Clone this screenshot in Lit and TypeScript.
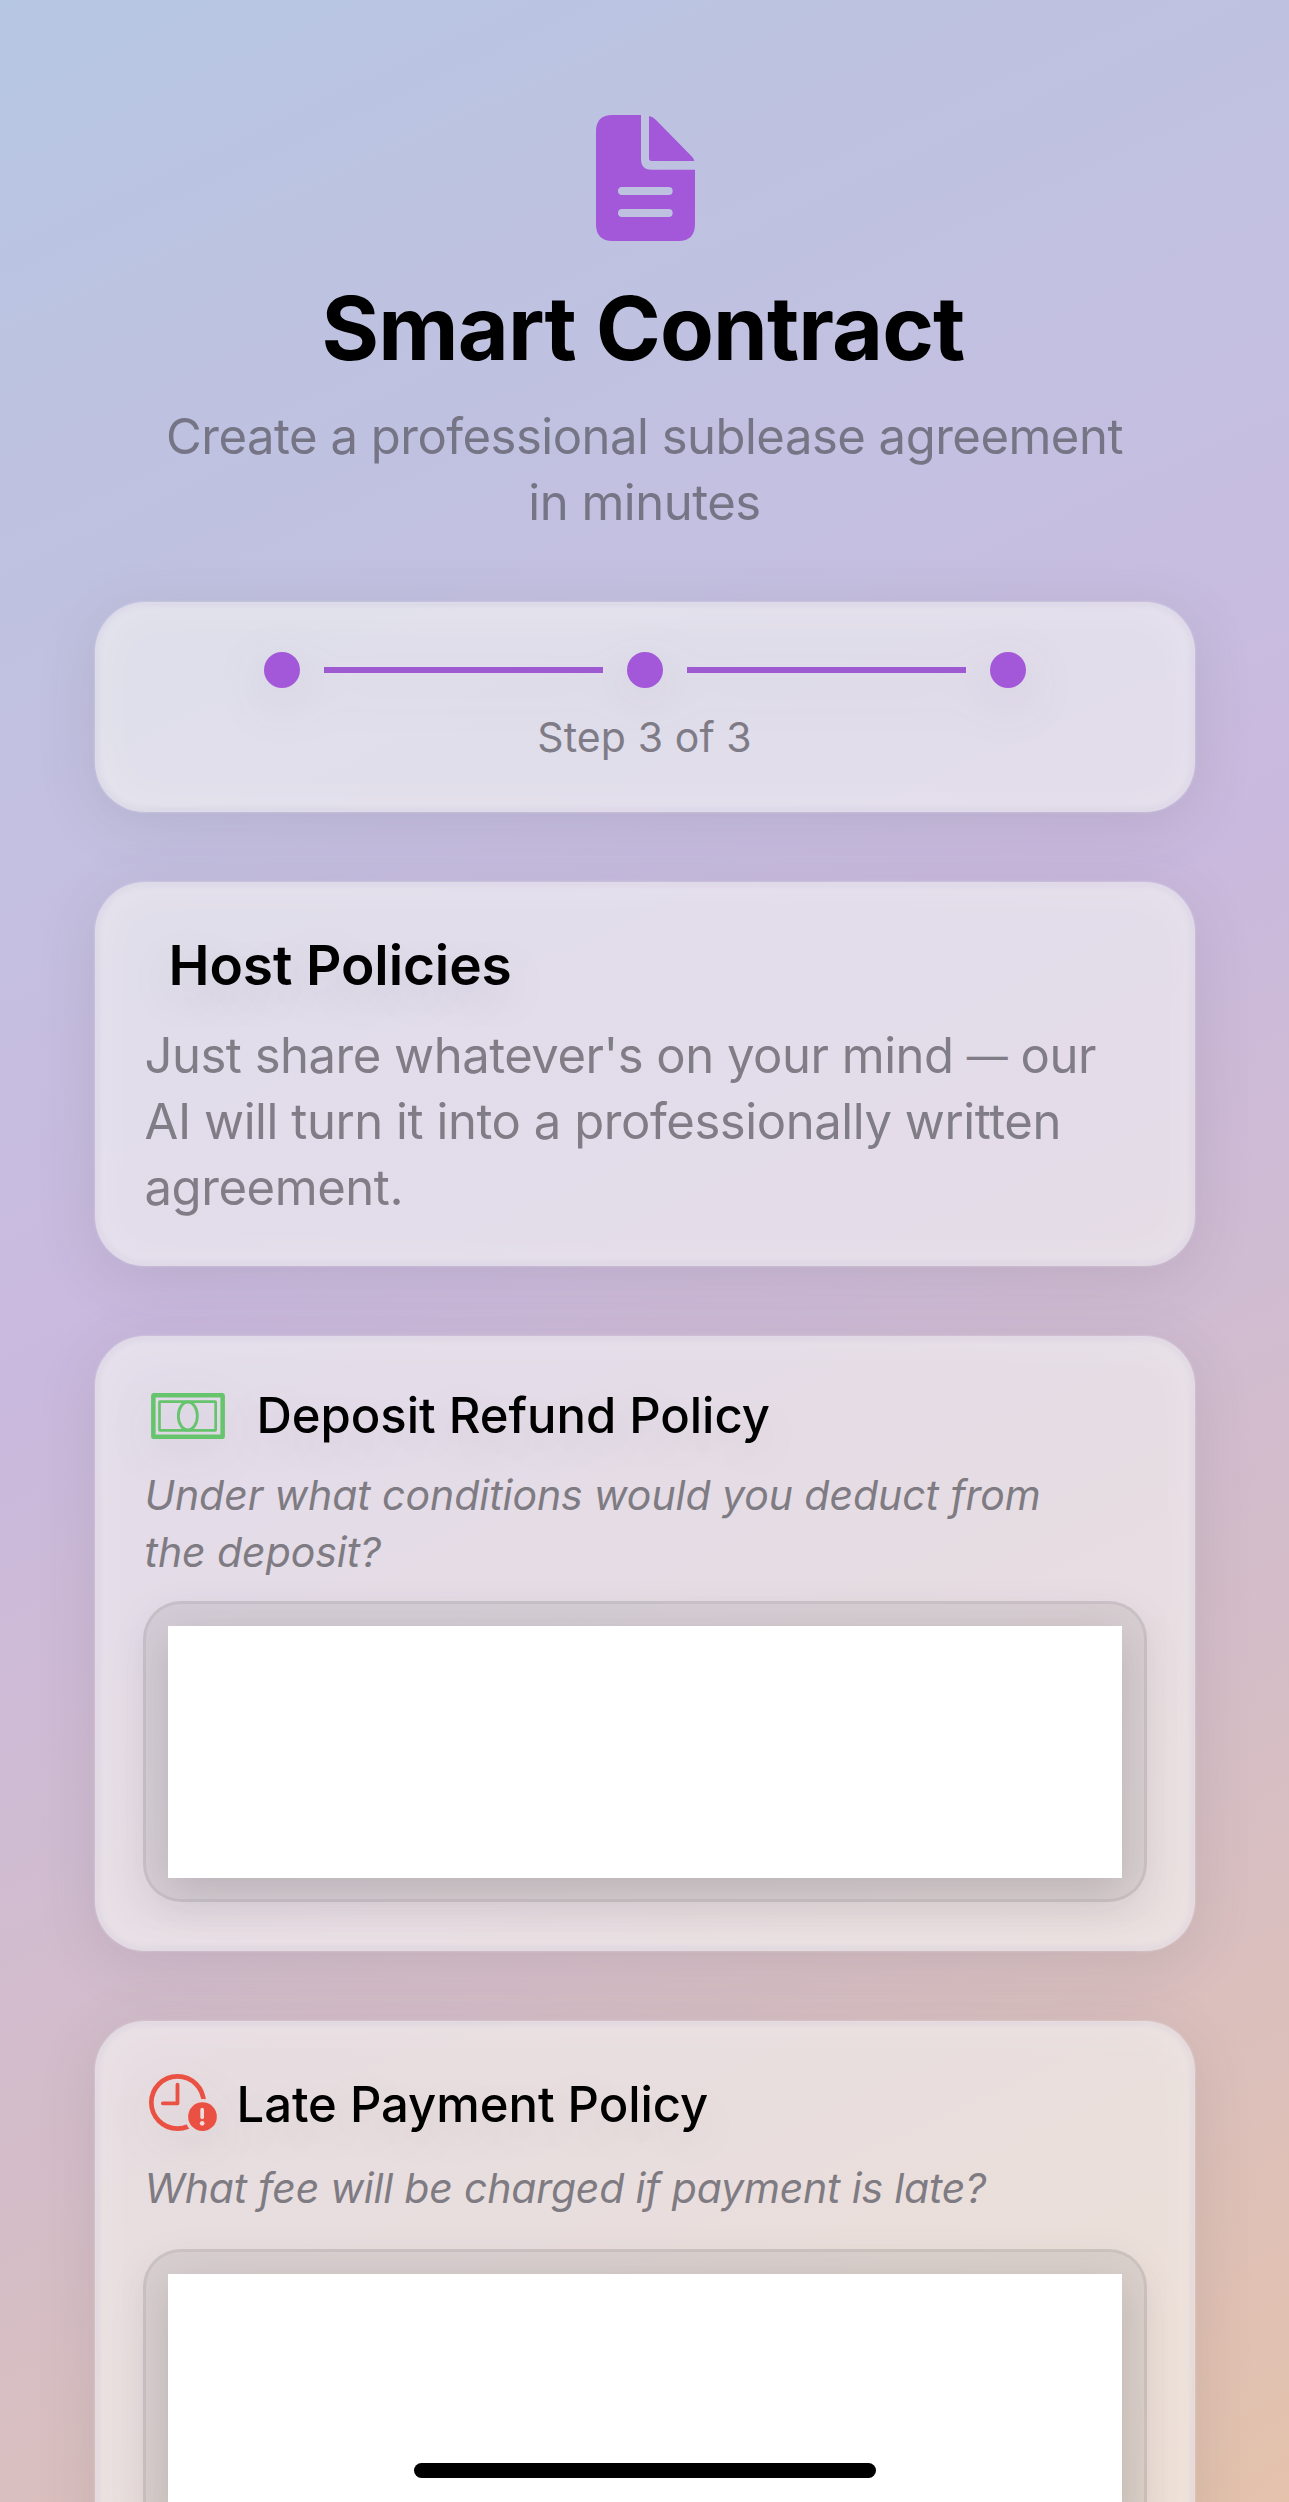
import { LitElement, html, css, svg, nothing } from "lit";
import { customElement, property } from "lit/decorators.js";

const documentIcon = html`
  <svg class="doc" viewBox="108 75 297 378" width="99" height="126" fill="currentColor">
    <path
      fill-rule="evenodd"
      d="M158 75H243V207Q243 239 274 239H405V402Q405 453 355 453H158Q108 453 108 403V124Q108 75 158 75Z
         M186 291a12 12 0 0 0 0 24H326a12 12 0 0 0 0-24Z
         M186 357a12 12 0 0 0 0 24H326a12 12 0 0 0 0-24Z"
    />
    <path d="M267 78Q278 80 288 90L391 195Q402 206 403 213H275Q267 213 267 205Z" />
  </svg>
`;

const banknoteIcon = html`
  <svg viewBox="63 69 222 138" width="74" height="46" fill="none" stroke="#66c46c">
    <rect x="70" y="75.500" width="208" height="125" rx="2" stroke-width="13.500" />
    <rect x="88.500" y="95" width="168.500" height="86" rx="1" stroke-width="8" />
    <ellipse cx="173.500" cy="138" rx="28.500" ry="42" stroke-width="8.500" />
  </svg>
`;

const clockAlertIcon = html`
  <svg viewBox="57 72 203 171" width="68" height="57" fill="none" stroke="#ea5142">
    ${svg`
      <defs>
        <mask id="badge-gap" maskUnits="userSpaceOnUse" x="50" y="60" width="220" height="190">
          <rect x="50" y="60" width="220" height="190" fill="#fff" stroke="none" />
          <circle cx="217" cy="200" r="53" fill="#000" stroke="none" />
        </mask>
      </defs>
      <circle cx="142" cy="157.500" r="78.500" stroke-width="14" mask="url(#badge-gap)" />
      <path d="M142 104V160H98" stroke-width="11.500" stroke-linecap="round" stroke-linejoin="round" />
      <circle cx="217" cy="200" r="43" fill="#ea5142" stroke="none" />
      <path d="M216 179V202" stroke="#efdcdd" stroke-width="11" stroke-linecap="round" />
      <circle cx="216" cy="220" r="7" fill="#efdcdd" stroke="none" />
    `}
  </svg>
`;

@customElement("glass-card")
class GlassCard extends LitElement {
  static styles = css`
    :host {
      display: block;
      box-sizing: border-box;
      width: 1100px;
      padding: 47px 49px;
      border-radius: 50px;
      background: rgba(244, 244, 243, 0.58);
      box-shadow:
        inset 0 0 4px 5px rgba(196, 184, 210, 0.18),
        inset 0 0 50px rgba(255, 255, 255, 0.26),
        0 0 3px rgba(255, 255, 255, 0.35),
        0 12px 60px rgba(75, 75, 85, 0.14);
    }
  `;
  render() {
    return html`<slot></slot>`;
  }
}

@customElement("step-progress")
class StepProgress extends LitElement {
  @property({ type: Number }) current = 1;
  @property({ type: Number }) total = 1;

  static styles = css`
    :host {
      display: block;
    }
    .track {
      display: flex;
      align-items: center;
      justify-content: center;
      gap: 24px;
      height: 36px;
      margin-top: 3px;
      filter: drop-shadow(0 14px 26px rgba(70, 65, 75, 0.12));
    }
    .dot {
      width: 36px;
      height: 36px;
      border-radius: 50%;
      background: #a258d8;
    }
    .line {
      width: 279px;
      height: 6px;
      background: #9e5ad0;
    }
    .label {
      margin-top: 22px;
      font-size: 41px;
      line-height: 54px;
      letter-spacing: 0.1px;
      text-align: center;
      color: #7f7c87;
    }
  `;
  render() {
    return html`
      <div class="track">
        ${Array.from(
          { length: this.total },
          (_, i) => html`${i ? html`<div class="line"></div>` : nothing}<div class="dot"></div>`,
        )}
      </div>
      <div class="label">Step ${this.current} of ${this.total}</div>
    `;
  }
}

@customElement("policy-field")
class PolicyField extends LitElement {
  static styles = css`
    :host {
      display: block;
      box-sizing: border-box;
      width: 1004px;
      height: 301px;
      margin-left: -1px;
      padding: 22px;
      border: 3px solid rgba(80, 75, 80, 0.1);
      border-radius: 38px;
      background: rgba(110, 110, 110, 0.13);
      box-shadow: 0 8px 40px rgba(75, 75, 80, 0.06);
    }
    .editor {
      height: 252px;
      background: #fff;
      box-shadow: 0 12px 40px rgba(70, 66, 68, 0.2);
    }
  `;
  render() {
    return html`<div class="editor"></div>`;
  }
}

@customElement("app-root")
class AppRoot extends LitElement {
  static styles = css`
    :host {
      display: block;
      font-family: Inter, "Liberation Sans", sans-serif;
    }
    .screen {
      position: relative;
      box-sizing: border-box;
      width: 1289px;
      height: 2502px;
      overflow: hidden;
      background: linear-gradient(
          155.250deg,
          #b2cbe6 0%,
          #bdc2e0 22%,
          #c4c0e1 35%,
          #cab9de 50%,
          #d6bec5 77%,
          #e4c2ac 100%
        )
        left bottom / 100% 2796px no-repeat;
    }
    .content {
      display: flex;
      flex-direction: column;
      align-items: center;
      padding-top: 115px;
    }
    svg {
      display: block;
      flex: none;
    }
    .doc {
      color: #a258d8;
      margin-left: 1px;
    }
    h1,
    h2,
    h3,
    p {
      margin: 0;
      white-space: nowrap;
    }
    h1 {
      margin: 33px 3px 0 0;
      font-size: 88px;
      font-weight: 700;
      line-height: 108px;
      letter-spacing: -0.9px;
      color: #000;
    }
    .subtitle {
      margin: 22px 0 66px;
      font-size: 49px;
      line-height: 66px;
      letter-spacing: -0.5px;
      text-align: center;
      color: #757586;
    }
    .cards {
      display: flex;
      flex-direction: column;
      gap: 70px;
    }
    .steps {
      height: 210px;
    }
    .intro {
      height: 384px;
    }
    .deposit {
      height: 615px;
    }
    .late {
      height: 640px;
    }
    h2 {
      padding-left: 25px;
      font-size: 55px;
      font-weight: 600;
      line-height: 72px;
      letter-spacing: -0.1px;
      color: #000;
      text-shadow: 0 14px 50px rgba(60, 55, 65, 0.14);
    }
    .body {
      margin: 22px 0 0 1px;
      font-size: 49px;
      line-height: 66px;
      letter-spacing: -0.43px;
      color: #807d86;
    }
    .lead {
      letter-spacing: -0.49px;
    }
    .dash {
      font-size: 41px;
      vertical-align: 2px;
      line-height: 1;
    }
    .heading {
      display: flex;
      align-items: center;
    }
    .heading svg {
      filter: drop-shadow(0 14px 22px rgba(60, 55, 65, 0.1));
    }
    .deposit .heading {
      height: 66px;
      padding-left: 7px;
      gap: 32px;
    }
    .late .heading {
      height: 74px;
      padding: 0 0 0 5px;
      gap: 20px;
    }
    .late .heading svg {
      margin-bottom: 5px;
    }
    h3 {
      font-size: 49px;
      font-weight: 500;
      line-height: 66px;
      letter-spacing: -0.04px;
      color: #000;
      text-shadow: 0 14px 50px rgba(60, 55, 65, 0.12);
    }
    .hint {
      font-size: 41px;
      font-style: italic;
      line-height: 57px;
      letter-spacing: -0.07px;
      color: #7f7b83;
      margin: 18px 0 20px 1px;
    }
    .late .hint {
      margin: 18px 0 32px 1px;
      letter-spacing: -0.19px;
    }
    .home {
      position: absolute;
      left: 414px;
      top: 2463px;
      width: 462px;
      height: 15px;
      border-radius: 8px;
      background: #000;
    }
  `;

  render() {
    return html`
      <main class="screen">
        <div class="content">
          ${documentIcon}
          <h1>Smart Contract</h1>
          <p class="subtitle">Create a professional sublease agreement<br />in minutes</p>
          <div class="cards">
            <glass-card class="steps">
              <step-progress current="3" total="3"></step-progress>
            </glass-card>
            <glass-card class="intro">
              <h2>Host Policies</h2>
              <p class="body">
                <span class="lead">Just share whatever's on your mind <span class="dash">—</span> our</span><br />AI
                will turn it into a professionally written<br />agreement.
              </p>
            </glass-card>
            <glass-card class="deposit">
              <div class="heading">
                ${banknoteIcon}
                <h3>Deposit Refund Policy</h3>
              </div>
              <p class="hint">Under what conditions would you deduct from<br />the deposit?</p>
              <policy-field></policy-field>
            </glass-card>
            <glass-card class="late">
              <div class="heading">
                ${clockAlertIcon}
                <h3>Late Payment Policy</h3>
              </div>
              <p class="hint">What fee will be charged if payment is late?</p>
              <policy-field></policy-field>
            </glass-card>
          </div>
        </div>
        <div class="home"></div>
      </main>
    `;
  }
}
